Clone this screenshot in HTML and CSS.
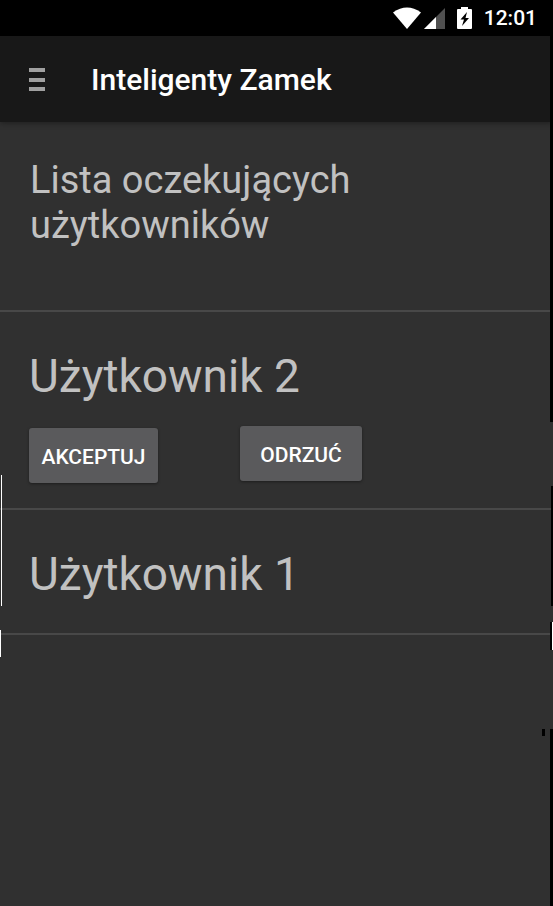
FILE: index.html
```html
<!DOCTYPE html>
<html lang="pl">
<head>
<meta charset="utf-8">
<meta name="viewport" content="width=device-width, initial-scale=1">
<title>Inteligenty Zamek</title>
<link rel="stylesheet" href="styles.css">
</head>
<body>
<div class="screen">
  <div class="status-bar">
    <svg class="wifi" width="28" height="22" viewBox="0 0 28 22" aria-hidden="true"><path fill="#fff" d="M0 5.500Q14-4.500 28 5.500L14 22Z"/></svg>
    <svg class="signal" width="21" height="21" viewBox="0 0 21 21" aria-hidden="true"><path fill="#505050" d="M21 0V21H0Z"/><path fill="#fff" d="M12 9V21H0Z"/></svg>
    <svg class="battery" width="15" height="22" viewBox="0 0 15 22" aria-hidden="true"><path fill="#fff" d="M4 0H11V2H14Q15 2 15 3V21Q15 22 14 22H1Q0 22 0 21V3Q0 2 1 2H4Z"/><path fill="#000" d="M10 5L3.500 12.500H7L5 19L12 11H8.500Z"/></svg>
    <time class="clock">12:01</time>
  </div>
  <header class="app-bar">
    <button class="menu" type="button" aria-label="Menu">
      <svg width="16" height="24" viewBox="0 0 16 24" aria-hidden="true"><path fill="#a0a0a0" d="M0 0H16V4H0ZM0 10H16V14H0ZM0 19H16V23H0Z"/></svg>
    </button>
    <h1 class="title">Inteligenty Zamek</h1>
  </header>
  <main>
    <h2 class="heading">Lista oczekujących<br>użytkowników</h2>
    <ul class="users">
      <li class="user user-open">
        <h3 class="name">Użytkownik 2</h3>
        <div class="actions">
          <button class="action accept" type="button">AKCEPTUJ</button>
          <button class="action reject" type="button">ODRZUĆ</button>
        </div>
      </li>
      <li class="user">
        <h3 class="name">Użytkownik 1</h3>
      </li>
    </ul>
  </main>
  <svg class="edge edge-left" width="2" height="906" viewBox="0 0 2 906" aria-hidden="true"><path fill="#fff" d="M1 475H2V606H1ZM0 630H1V657H0Z"/></svg>
  <svg class="edge edge-right" width="11" height="906" viewBox="0 0 11 906" aria-hidden="true"><path fill="#000" d="M8 0H11V422H8ZM9 486H11V606H9ZM8 622H10V650H8ZM8 729H11V906H8ZM0 729H3V736H0Z"/><path fill="#fff" d="M10 622H11V650H10Z"/></svg>
</div>
</body>
</html>
```
FILE: styles.css
```css
* {
  box-sizing: border-box;
}

body {
  margin: 0;
  background: #303030;
  color: #c1c1c1;
  font-family: Roboto, sans-serif;
}

h1, h2, h3, ul {
  margin: 0;
  padding: 0;
  font-weight: 400;
}

.screen {
  position: relative;
  min-height: 100vh;
  overflow: hidden;
}

.status-bar {
  display: flex;
  justify-content: flex-end;
  align-items: center;
  height: 36px;
  padding-right: 16px;
  background: #000;
}

.signal {
  margin-left: 3px;
}

.battery {
  margin: 0 12px;
}

.clock {
  color: #fff;
  font-size: 21px;
  font-weight: 500;
  line-height: 24px;
}

.app-bar {
  display: flex;
  align-items: center;
  height: 86px;
  padding: 2px 29px 0;
  background: #181818;
  box-shadow: 0 1px 6px rgba(0, 0, 0, 0.4);
}

.menu {
  display: flex;
  margin-right: 46px;
  padding: 0;
  border: 0;
  background: none;
}

.title {
  color: #fff;
  font-size: 30px;
  font-weight: 500;
  line-height: 36px;
}

.heading {
  padding: 36px 30px 62px;
  font-size: 38px;
  line-height: 45px;
}

.users {
  list-style: none;
}

.user {
  padding: 37px 29px 32px;
  border-top: 2px solid #484848;
}

.user:last-child {
  border-bottom: 2px solid #484848;
}

.user-open {
  padding-bottom: 25px;
}

.name {
  font-size: 46px;
  line-height: 54px;
}

.actions {
  display: flex;
  align-items: flex-start;
  gap: 82px;
  margin-top: 23px;
}

.action {
  height: 55px;
  padding: 2px 0 0;
  border: 0;
  border-radius: 3px;
  background: #5a5a5c;
  box-shadow: 0 1px 3px rgba(0, 0, 0, 0.4);
  color: #fff;
  font-family: inherit;
  font-size: 21px;
  font-weight: 500;
}

.accept {
  width: 129px;
  margin: 2px 0 0;
}

.reject {
  width: 122px;
}

.edge {
  position: absolute;
  top: 0;
}

.edge-left {
  left: 0;
}

.edge-right {
  right: 0;
}
```
